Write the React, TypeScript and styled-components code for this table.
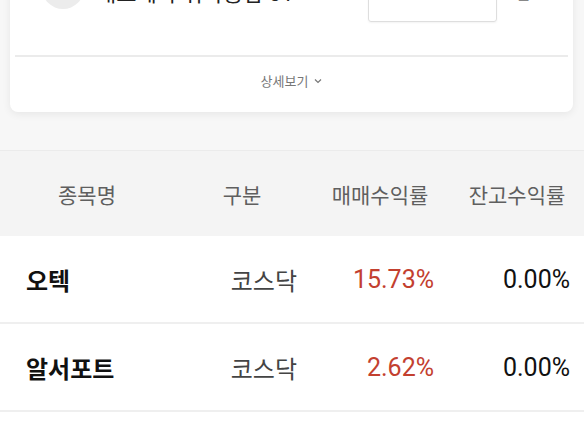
import styled, { createGlobalStyle } from "styled-components";

const GlobalStyle = createGlobalStyle`
    body {
        margin: 0;
        background: #fff;
        font-family: "Roboto", "Noto Sans CJK KR", sans-serif;
    }
`;

const Page = styled.div`
    width: 584px;
    overflow: hidden;
    margin-top: -60px; // 스크롤 된 상태처럼 카드 윗부분이 잘려 보임
`;

const TopSection = styled.section`
    background: #f7f7f7;
    padding-bottom: 38px;
`;

const Card = styled.div`
    margin: 0 11px 0 10px;
    background: #fff;
    border-radius: 8px;
    box-shadow: 0 2px 8px rgba(0, 0, 0, 0.07);
`;

const AccountRow = styled.div`
    display: flex;
    align-items: flex-start;
    padding: 26px 43px 33px 32px;
`;

const Avatar = styled.div`
    width: 42px;
    height: 42px;
    margin-top: 1px;
    border-radius: 50%;
    background: #ececec;
    flex-shrink: 0;
`;

const AccountName = styled.div`
    flex: 1;
    margin: 14px 0 0 12px;
    font-size: 22px;
    line-height: 28px;
    color: #222;
    white-space: nowrap;
`;

const AmountBox = styled.div`
    width: 127px;
    height: 54px;
    border: 1px solid #dedede;
    border-radius: 3px;
    box-shadow: 0 1px 2px rgba(0, 0, 0, 0.05);
`;

const Unit = styled.span`
    margin: 19px 0 0 19px;
    font-size: 15px;
    line-height: 20px;
    color: #888;
`;

const Divider = styled.div`
    height: 2px;
    margin: 0 5px;
    background: #ebebeb;
`;

const MoreButton = styled.button`
    width: 100%;
    height: 55px;
    padding: 0 0 8px;
    border: none;
    background: none;
    display: flex;
    align-items: center;
    justify-content: center;
    gap: 6px;
    font-family: inherit;
    font-size: 13px;
    color: #777;
`;

const Table = styled.div`
    border-top: 1px solid #ebebeb;
    background: #fff;
`;

const Row = styled.div<{ $head?: boolean }>`
    display: grid;
    grid-template-columns: 174px 136px 140px 1fr;
    align-items: center;
    height: ${(props) => (props.$head ? "85px" : "86px")};
    background: ${(props) => (props.$head ? "#f4f4f4" : "#fff")};
    border-bottom: ${(props) => (props.$head ? "none" : "2px solid #efefef")};
`;

const HeadCell = styled.div`
    text-align: center;
    font-size: 21px;
    color: #5f5f5f;
`;

const NameCell = styled.div`
    padding-left: 26px;
    font-size: 24px;
    font-weight: 700;
    color: #111;
`;

const ValueCell = styled.div<{ $pad: number; $color?: string; $num?: boolean }>`
    text-align: right;
    padding-right: ${(props) => props.$pad}px;
    font-size: ${(props) => (props.$num ? "25px" : "24px")};
    color: ${(props) => props.$color || "#111"};
`;

interface StockInterface {
    name: string;
    market: string;
    tradeRate: string;
    balanceRate: string;
}

const stocks: StockInterface[] = [
    { name: "오텍", market: "코스닥", tradeRate: "15.73%", balanceRate: "0.00%" },
    { name: "알서포트", market: "코스닥", tradeRate: "2.62%", balanceRate: "0.00%" },
];

function App() {
    return (
        <Page>
            <GlobalStyle />
            <TopSection>
                <Card>
                    <AccountRow>
                        <Avatar />
                        <AccountName>대표계좌 위탁종합 01</AccountName>
                        <AmountBox />
                        <Unit>원</Unit>
                    </AccountRow>
                    <Divider />
                    <MoreButton>
                        상세보기
                        <svg width="8" height="6" viewBox="0 0 8 6">
                            <path d="M1 1.5 L4 4.5 L7 1.5" fill="none" stroke="#777" strokeWidth="1.2" />
                        </svg>
                    </MoreButton>
                </Card>
            </TopSection>
            <Table>
                <Row $head>
                    <HeadCell>종목명</HeadCell>
                    <HeadCell>구분</HeadCell>
                    <HeadCell>매매수익률</HeadCell>
                    <HeadCell>잔고수익률</HeadCell>
                </Row>
                {stocks.map((stock) => (
                    <Row key={stock.name}>
                        <NameCell>{stock.name}</NameCell>
                        <ValueCell $pad={13} $color="#444">{stock.market}</ValueCell>
                        <ValueCell $pad={16} $color="#c3402f" $num>{stock.tradeRate}</ValueCell>
                        <ValueCell $pad={14} $num>{stock.balanceRate}</ValueCell>
                    </Row>
                ))}
            </Table>
        </Page>
    );
}

export default App;
